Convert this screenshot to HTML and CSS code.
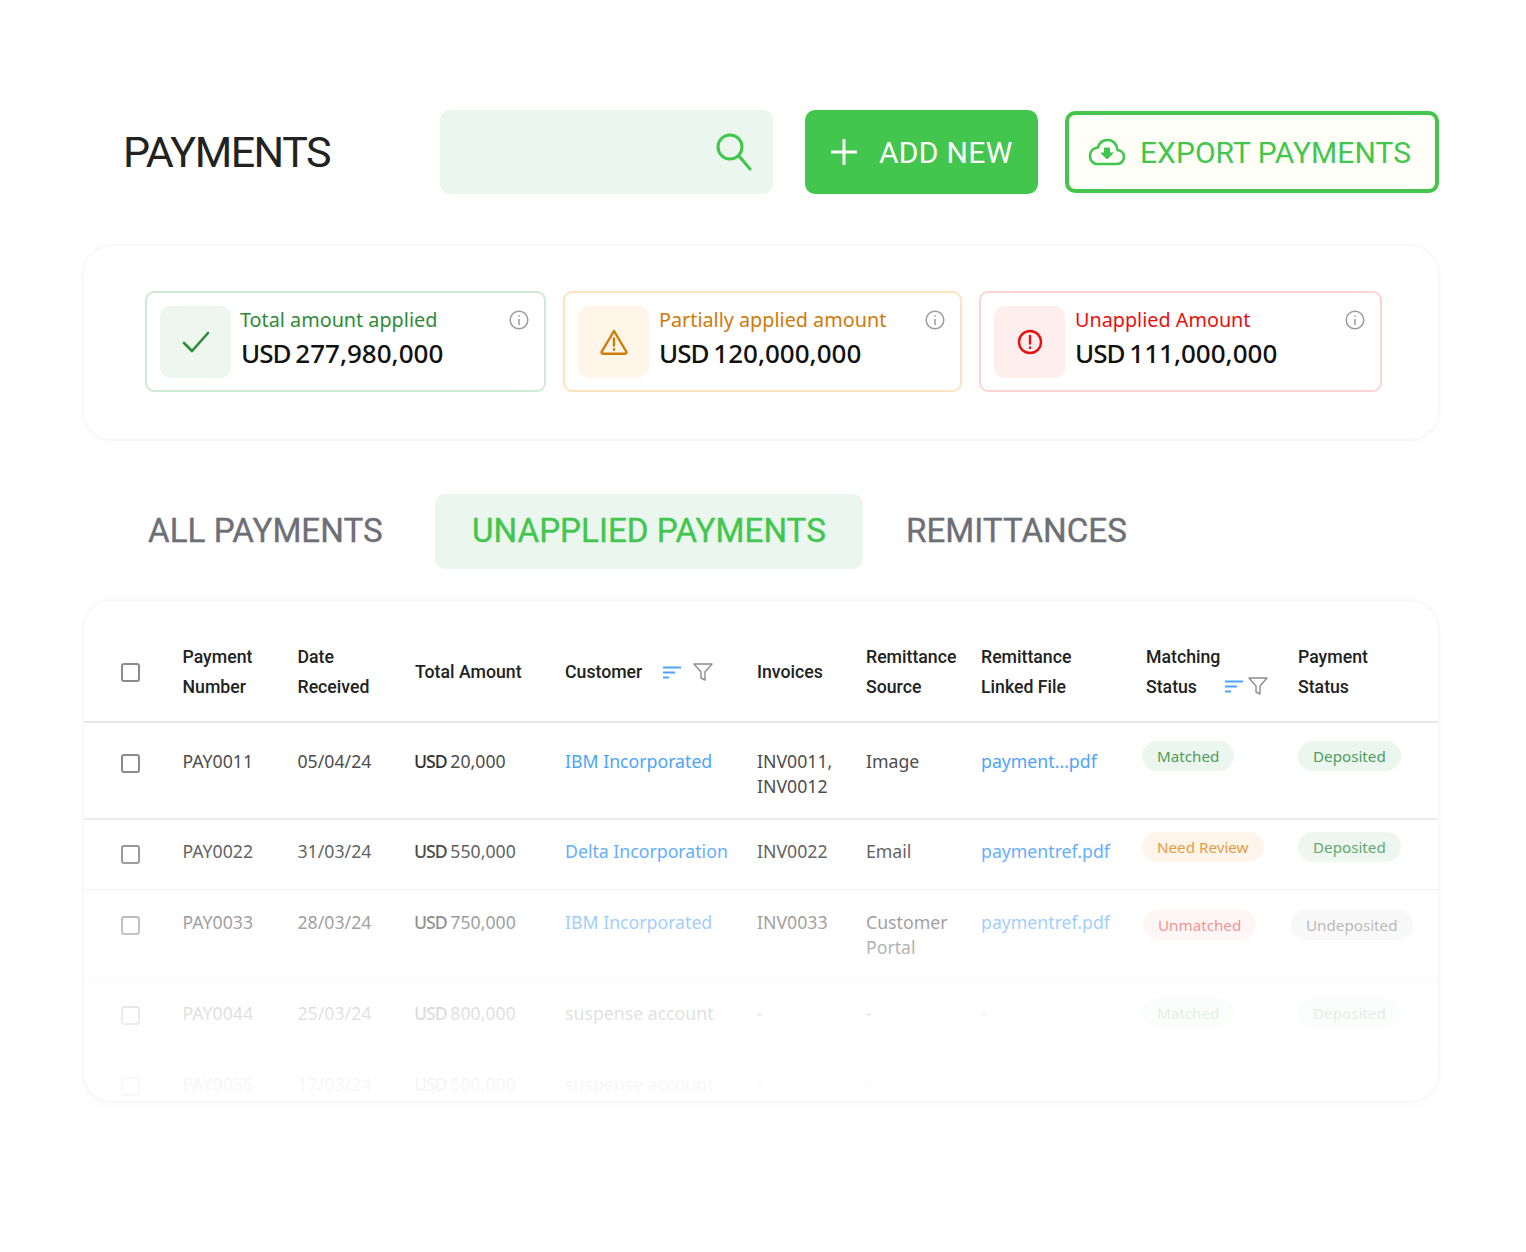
FILE: index.html
```html
<!DOCTYPE html>
<html lang="en">
<head>
<meta charset="utf-8">
<title>Payments</title>
<link rel="stylesheet" href="styles.css">
</head>
<body>
<main class="page">
  <header class="top">
    <h1 class="title">PAYMENTS</h1>
    <div class="search">
      <svg class="search-icon" viewBox="0 0 36 38" fill="none" stroke="#3fc64c" stroke-width="3"><circle cx="14" cy="14" r="12"/><path d="M23 23l11 13" stroke-linecap="round"/></svg>
    </div>
    <button class="btn add"><svg class="plus" viewBox="0 0 26 26" fill="none" stroke="#fff" stroke-width="3" stroke-linecap="round"><path d="M13 1v24M1 13h24"/></svg><span>ADD NEW</span></button>
    <button class="btn export"><svg class="cloud" viewBox="0 0 38 28" fill="none" stroke="#3fc64c" stroke-width="2.6" stroke-linejoin="round"><path d="M9 26h20c4 0 7-3 7-7s-3-6.500-6.500-7C29 6 25 2 19.500 2S11 5.500 10 9.500C5 10 2 13.500 2 18c0 4.500 3 8 7 8z"/><path d="M16.500 10h5v5h3.500L19 21l-6-6h3.500z" fill="#3fc64c" stroke-width="1"/></svg><span>EXPORT PAYMENTS</span></button>
  </header>

  <section class="summary">
    <article class="stat stat-green">
      <div class="tile"><svg viewBox="0 0 28 24" fill="none" stroke="currentColor" stroke-width="2.600" stroke-linecap="round" stroke-linejoin="round"><path d="M2 13l8 8L26 3"/></svg></div>
      <div class="stat-text"><p class="stat-label">Total amount applied</p><p class="stat-value"><span class="cur">USD</span> 277,980,000</p></div>
      <svg class="info" viewBox="0 0 20 20" fill="none" stroke="#9a9a9a" stroke-width="1.500"><circle cx="10" cy="10" r="8.800"/><path d="M10 9v6M10 5.200v1.600"/></svg>
    </article>
    <article class="stat stat-orange">
      <div class="tile"><svg viewBox="0 0 28 26" fill="none" stroke="currentColor" stroke-width="2.400" stroke-linecap="round" stroke-linejoin="round"><path d="M14 2L1.800 22.500c-.6 1.200.2 2.300 1.400 2.300h21.600c1.200 0 2-1.100 1.400-2.300z"/><path d="M14 9.500v7M14 20.300v.4"/></svg></div>
      <div class="stat-text"><p class="stat-label">Partially applied amount</p><p class="stat-value"><span class="cur">USD</span> 120,000,000</p></div>
      <svg class="info" viewBox="0 0 20 20" fill="none" stroke="#9a9a9a" stroke-width="1.500"><circle cx="10" cy="10" r="8.800"/><path d="M10 9v6M10 5.200v1.600"/></svg>
    </article>
    <article class="stat stat-red">
      <div class="tile"><svg viewBox="0 0 26 26" fill="none" stroke="currentColor" stroke-width="2.400" stroke-linecap="round"><circle cx="13" cy="13" r="11"/><path d="M13 7v7.500M13 18.500v.4"/></svg></div>
      <div class="stat-text"><p class="stat-label">Unapplied Amount</p><p class="stat-value"><span class="cur">USD</span> 111,000,000</p></div>
      <svg class="info" viewBox="0 0 20 20" fill="none" stroke="#9a9a9a" stroke-width="1.500"><circle cx="10" cy="10" r="8.800"/><path d="M10 9v6M10 5.200v1.600"/></svg>
    </article>
  </section>

  <nav class="tabs">
    <a class="tab tab-all">ALL PAYMENTS</a>
    <a class="tab tab-active">UNAPPLIED PAYMENTS</a>
    <a class="tab tab-rem">REMITTANCES</a>
  </nav>

  <section class="table">
    <div class="row head">
      <span class="box"></span>
      <div>Payment<br>Number</div>
      <div>Date<br>Received</div>
      <div>Total Amount</div>
      <div class="with-icons">Customer
        <svg class="sort" viewBox="0 0 18 13" fill="none" stroke="#4da3ff" stroke-width="2"><path d="M0 1.500h18M0 6.500h12M0 11.500h6"/></svg>
        <svg class="funnel" viewBox="0 0 20 20" fill="none" stroke="#8c8c8c" stroke-width="1.400" stroke-linejoin="round"><path d="M1 2h18l-7 8v8l-4-2v-6z"/></svg>
      </div>
      <div>Invoices</div>
      <div>Remittance<br>Source</div>
      <div>Remittance<br>Linked File</div>
      <div class="match-head">Matching<br>Status
        <span class="match-icons">
          <svg class="sort" viewBox="0 0 18 13" fill="none" stroke="#4da3ff" stroke-width="2"><path d="M0 1.500h18M0 6.500h12M0 11.500h6"/></svg>
          <svg class="funnel" viewBox="0 0 20 20" fill="none" stroke="#8c8c8c" stroke-width="1.400" stroke-linejoin="round"><path d="M1 2h18l-7 8v8l-4-2v-6z"/></svg>
        </span>
      </div>
      <div>Payment<br>Status</div>
    </div>

    <div class="row body r1">
      <span class="box"></span><div>PAY0011</div><div>05/04/24</div><div class="amt"><span class="cur">USD</span> 20,000</div><div class="link">IBM Incorporated</div><div>INV0011,<br>INV0012</div><div>Image</div><div class="link">payment...pdf</div>
      <div class="pillcell"><span class="pill green">Matched</span></div><div class="pillcell"><span class="pill green">Deposited</span></div>
    </div>
    <div class="row body r2">
      <span class="box"></span><div>PAY0022</div><div>31/03/24</div><div class="amt"><span class="cur">USD</span> 550,000</div><div class="link">Delta Incorporation</div><div>INV0022</div><div>Email</div><div class="link">paymentref.pdf</div>
      <div class="pillcell"><span class="pill orange">Need Review</span></div><div class="pillcell"><span class="pill green">Deposited</span></div>
    </div>
    <div class="row body r3">
      <span class="box"></span><div>PAY0033</div><div>28/03/24</div><div class="amt"><span class="cur">USD</span> 750,000</div><div class="link">IBM Incorporated</div><div>INV0033</div><div>Customer<br>Portal</div><div class="link">paymentref.pdf</div>
      <div class="pillcell wide"><span class="pill red">Unmatched</span></div><div class="pillcell wide"><span class="pill grey">Undeposited</span></div>
    </div>
    <div class="row body r4">
      <span class="box"></span><div>PAY0044</div><div>25/03/24</div><div class="amt"><span class="cur">USD</span> 800,000</div><div>suspense account</div><div>-</div><div>-</div><div class="link">-</div>
      <div class="pillcell"><span class="pill green">Matched</span></div><div class="pillcell"><span class="pill green">Deposited</span></div>
    </div>
    <div class="row body r5">
      <span class="box"></span><div>PAY0055</div><div>17/03/24</div><div class="amt"><span class="cur">USD</span> 500,000</div><div>suspense account</div><div>-</div><div>-</div><div class="link">-</div><div></div><div></div>
    </div>
    <div class="fade"></div>
  </section>
</main>
</body>
</html>
```
FILE: styles.css
```css
* { box-sizing: border-box; }
html, body { margin: 0; background: #fff; }
body { font-family: "Noto Sans", sans-serif; color: #222; }
p, h1 { margin: 0; }

.page { width: 1526px; height: 1252px; padding: 110px 86px 0 82px; overflow: hidden; }

/* Top bar */
.top { display: flex; align-items: center; height: 84px; padding-left: 41px; }
.title { font: 400 43px/1 Roboto, sans-serif; color: #222; width: 317px; letter-spacing: -1.500px; }
.search { width: 333px; height: 84px; background: #ebf6ee; border-radius: 10px; display: flex; align-items: center; justify-content: flex-end; padding-right: 21px; }
.search-icon { width: 36px; height: 38px; }
.btn { display: flex; align-items: center; font-family: Roboto, sans-serif; font-weight: 400; font-size: 30px; border-radius: 10px; cursor: pointer; white-space: nowrap; }
.add { margin-left: 32px; width: 233px; height: 84px; background: #42c64d; color: #fff; border: 0; padding: 0 0 0 26px; gap: 22px; letter-spacing: .3px; }
.plus { width: 26px; height: 26px; flex: none; }
.export { margin-left: 27px; width: 374px; height: 82px; background: #fffff8; color: #42c64d; border: 4px solid #42c64d; padding: 0 0 0 19px; gap: 14px; letter-spacing: .05px; }
.cloud { width: 38px; height: 28px; flex: none; }

/* Summary */
.summary { margin-top: 50px; height: 197px; border: 2px solid #f7f8fb; border-radius: 30px; padding: 45px 50px 0 61px; display: flex; gap: 17px; box-shadow: 0 3px 10px rgba(244,245,250,.4); }
.stat { height: 101px; flex: none; border: 2px solid; border-radius: 9px; padding: 13px 15px 0 13px; display: flex; align-items: flex-start; background: #fff; }
.stat-green { width: 401px; border-color: #cfe9d3; color: #2e8b37; }
.stat-orange { width: 399px; border-color: #fde4c1; color: #d07a08; }
.stat-red { width: 403px; border-color: #fdd4d4; color: #e90f0f; }
.tile { width: 71px; height: 72px; flex: none; border-radius: 10px; display: flex; align-items: center; justify-content: center; }
.tile svg { width: 28px; height: 26px; }
.stat-green .tile { background: #edf6ef; }
.stat-orange .tile { background: #fff6e9; }
.stat-red .tile { background: #feeeee; }
.stat-text { flex: 1; padding-left: 9px; }
.stat-orange .stat-text, .stat-red .stat-text { padding-left: 10px; }
.stat-orange .stat-value, .stat-red .stat-value { margin-left: 0; }
.stat-label { font-size: 19.800px; line-height: 28px; }
.stat-value { font-size: 26px; line-height: 36px; margin-top: 1px; margin-left: 1px; color: #111; font-weight: 500; word-spacing: -2px; }
.stat-value .cur { letter-spacing: -1px; }
.info { width: 20px; height: 20px; flex: none; margin-top: 4px; }

/* Tabs */
.tabs { margin-top: 53px; height: 75px; display: flex; align-items: stretch; font: 400 33.200px/73px Roboto, sans-serif; color: #6d6e76; -webkit-text-stroke: .35px currentColor; }
.tab { display: block; }
.tab-all { width: 353px; padding-left: 66px; }
.tab-active { width: 428px; background: #ebf6ee; color: #42c64d; border-radius: 10px; padding-left: 37px; }
.tab-rem { padding-left: 43px; }

/* Table */
.table { position: relative; margin-top: 30px; height: 504px; border: 2px solid #f7f8fb; border-radius: 30px; overflow: hidden; box-shadow: 0 3px 10px rgba(244,245,250,.4); }
.row { display: grid; grid-template-columns: 98.500px 115px 117.500px 150px 192px 109px 115px 161px 156px 1fr; }
.head { height: 122px; padding-top: 22px; align-items: center; border-bottom: 2px solid #e6e6e6; font: 500 17.700px/30px Roboto, sans-serif; color: #222; }
.box { width: 19px; height: 19px; margin-left: 37px; border: 2px solid #8a8a8a; border-radius: 3px; display: block; }
.head .box { align-self: center; }
.with-icons { display: flex; align-items: center; }
.sort { width: 18px; height: 13px; }
.funnel { width: 20px; height: 20px; }
.with-icons .sort { margin-left: 21px; }
.with-icons .funnel { margin-left: 12px; }
.match-head { position: relative; padding-left: 4px; }
.match-icons { position: absolute; left: 83px; top: 34px; display: flex; align-items: center; gap: 5px; }

.body { font-size: 17.700px; line-height: 25px; color: #4d4d4d; border-bottom: 2px solid #ececec; }
.body .box { margin-top: 6px; }
.r1 .box, .r4 .box, .r5 .box { margin-top: 5px; }
.r1 { height: 97px; padding-top: 26px; }
.r2 { height: 70px; padding-top: 19px; border-bottom-width: 1px; }
.r3 { height: 91px; padding-top: 20px; border-bottom-width: 1px; }
.r4 { height: 70px; padding-top: 20px; border-bottom-width: 1px; }
.r5 { height: 60px; padding-top: 21px; border-bottom: 0; }
.amt .cur { color: #333; font-weight: 500; letter-spacing: -1px; }
.amt { margin-left: -1px; word-spacing: -1px; }
.link { color: #4da3ff; }
.pill { display: inline-block; position: relative; top: -6px; height: 30px; line-height: 30px; padding: 0 15px; border-radius: 15px; font-size: 15.200px; white-space: nowrap; margin-top: -9px; }
.r2 .pill { top: -5px; }
.r3 .pill { top: 2px; }
.r4 .pill { top: -1px; }
.wide .pill { margin-left: 1px; }
.wide + .wide .pill { margin-left: -7px; }
.green { background: #ebf6ee; color: #4f9c5b; }
.orange { background: #fff3e8; color: #e0902b; }
.red { background: #fdeeee; color: #f22b2b; }
.grey { background: #f3f3f3; color: #777; }

.fade { position: absolute; left: 0; right: 0; top: 190px; bottom: 0; pointer-events: none; background: linear-gradient(to bottom, rgba(255,255,255,0) 0%, rgba(255,255,255,.12) 20%, rgba(255,255,255,.47) 43%, rgba(255,255,255,.82) 71%, rgba(255,255,255,.95) 94%); }
```
